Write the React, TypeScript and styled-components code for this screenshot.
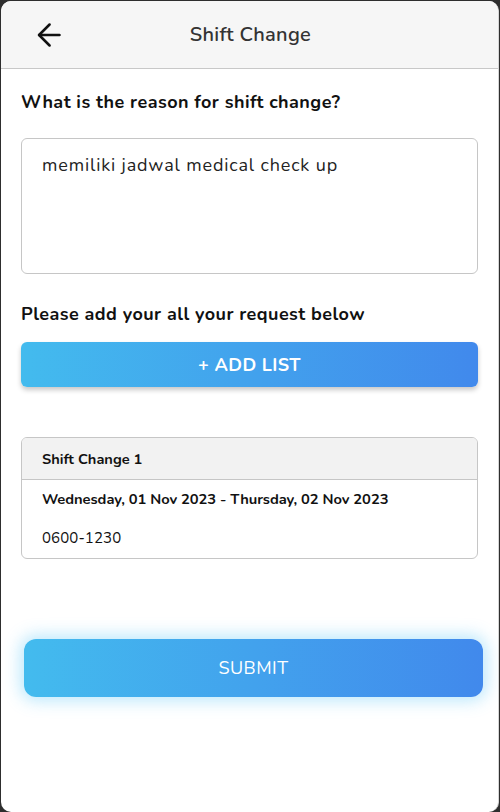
import React from "react";
import styled, { createGlobalStyle } from "styled-components";

const Global = createGlobalStyle`
  html, body { margin: 0; padding: 0; background: #2e2e2e; }
  body { font-family: "Nunito", "Lato", "Open Sans", sans-serif; }
  * { box-sizing: border-box; }
`;

const Frame = styled.div`
  margin: 1px 0 0 1px;
  width: 498px;
  height: 811px;
  background: #ffffff;
  border-radius: 10px;
  border-right: 1px solid #d6d6d6;
  overflow: hidden;
  display: flex;
  flex-direction: column;
`;

const Header = styled.header`
  height: 68px;
  flex-shrink: 0;
  background: #f6f6f6;
  border-bottom: 1px solid #c8c8c8;
  display: flex;
  align-items: center;
  position: relative;
  justify-content: center;
`;

const BackButton = styled.button`
  position: absolute;
  left: 32px;
  top: 18px;
  width: 32px;
  height: 32px;
  border: none;
  background: transparent;
  padding: 0;
  display: flex;
  align-items: center;
  justify-content: center;
`;

const Title = styled.h1`
  margin: 0 0 0 2px;
  font-size: 20px;
  font-weight: 600;
  letter-spacing: 0.3px;
  color: #333333;
`;

const Content = styled.main`
  display: flex;
  flex-direction: column;
  padding: 21px 20px 0 20px;
`;

const Label = styled.div<{ $gap?: number }>`
  font-size: 18px;
  line-height: 24px;
  font-weight: 700;
  letter-spacing: 0.45px;
  color: #111111;
  margin-top: ${(p) => p.$gap ?? 0}px;
`;

const Reason = styled.div`
  margin-top: 24px;
  height: 136px;
  border: 1px solid #c6c6c6;
  border-radius: 6px;
  padding: 14px 20px;
  font-size: 18px;
  line-height: 24px;
  letter-spacing: 0.85px;
  color: #222222;
`;

const AddButton = styled.button`
  margin-top: 16px;
  height: 45px;
  width: 100%;
  border: none;
  border-radius: 6px;
  background: linear-gradient(90deg, #43bbee 0%, #4189ec 100%);
  box-shadow: 0 3px 5px rgba(0, 0, 0, 0.22);
  color: #ffffff;
  font-family: inherit;
  font-size: 18px;
  font-weight: 700;
  letter-spacing: 0.4px;
`;

const Card = styled.section`
  margin-top: 50px;
  border: 1px solid #c6c6c6;
  border-radius: 6px;
  overflow: hidden;
`;

const CardHead = styled.div`
  height: 42px;
  background: #f2f2f2;
  border-bottom: 1px solid #c6c6c6;
  display: flex;
  align-items: center;
  padding: 0 20px;
  font-size: 14.6px;
  font-weight: 700;
  color: #111111;
`;

const CardBody = styled.div`
  padding: 9px 20px 10px;
  display: flex;
  flex-direction: column;
  gap: 19px;
`;

const CardLine = styled.div<{ $bold?: boolean }>`
  font-size: ${(p) => (p.$bold ? 14.7 : 15)}px;
  line-height: 20px;
  font-weight: ${(p) => (p.$bold ? 700 : 400)};
  letter-spacing: ${(p) => (p.$bold ? -0.05 : 0.1)}px;
  color: #111111;
`;

const SubmitButton = styled.button`
  margin: 80px 0 0 3px;
  width: 459px;
  height: 58px;
  border: none;
  border-radius: 12px;
  background: linear-gradient(90deg, #43bbee 0%, #4189ec 100%);
  box-shadow: 0 0 16px 4px rgba(66, 190, 245, 0.35);
  color: #ffffff;
  font-family: inherit;
  font-size: 18px;
  font-weight: 400;
  letter-spacing: 0.5px;
`;

const ArrowLeft = () => (
  <svg width="28" height="28" viewBox="0 0 24 24" fill="none" stroke="#111" strokeWidth="2.2" strokeLinecap="round" strokeLinejoin="round">
    <path d="M21 12H3.5" />
    <path d="M12.5 3l-9 9 9 9" />
  </svg>
);

export default function App() {
  return (
    <>
      <Global />
      <Frame>
        <Header>
          <BackButton aria-label="back">
            <ArrowLeft />
          </BackButton>
          <Title>Shift Change</Title>
        </Header>
        <Content>
          <Label>What is the reason for shift change?</Label>
          <Reason>memiliki jadwal medical check up</Reason>
          <Label $gap={28}>Please add your all your request below</Label>
          <AddButton>+ ADD LIST</AddButton>
          <Card>
            <CardHead>Shift Change 1</CardHead>
            <CardBody>
              <CardLine $bold>Wednesday, 01 Nov 2023 - Thursday, 02 Nov 2023</CardLine>
              <CardLine>0600-1230</CardLine>
            </CardBody>
          </Card>
          <SubmitButton>SUBMIT</SubmitButton>
        </Content>
      </Frame>
    </>
  );
}
